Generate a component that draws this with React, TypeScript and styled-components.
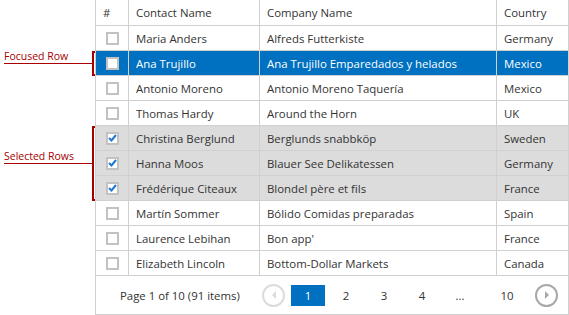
import React from "react";
import styled, { createGlobalStyle } from "styled-components";

const GlobalStyle = createGlobalStyle`
body {
  margin: 0;
  background: #ffffff;
  font-family: "Open Sans", "Noto Sans", sans-serif;
  font-size: 11.4px;
  color: #333333;
}
`

const Page = styled.div`
display: flex;
width: 569px;
height: 315px;
overflow: hidden;
`

const Notes = styled.div`
width: 95px;
position: relative;
flex-shrink: 0;
`

const Note = styled.div<{ top: number; height: number }>`
position: absolute;
left: 4px;
top: ${p => p.top}px;
width: 88px;
height: ${p => p.height}px;
border-right: 2px solid #a80000;
display: flex;
align-items: center;
&::before, &::after {
  content: "";
  position: absolute;
  right: -3px;
  width: 3px;
  height: 2px;
  background: #a80000;
}
&::before { top: 0; }
&::after { bottom: 0; }
`

const NoteLabel = styled.span`
display: block;
width: 100%;
color: #a80000;
font-size: 10.5px;
line-height: 13px;
border-bottom: 1px solid #a80000;
margin-bottom: 14px;
`

const Grid = styled.div`
width: 474px;
height: 315px;
border-left: 1px solid #d0d0d0;
border-right: 1px solid #d0d0d0;
border-bottom: 1px solid #d0d0d0;
box-sizing: border-box;
display: flex;
flex-direction: column;
`

const Row = styled.div<{ kind?: "focused" | "selected" | "plain" }>`
display: grid;
grid-template-columns: 33px 131px 237px 1fr;
height: 25px;
border-bottom: 1px solid #d0d0d0;
box-sizing: border-box;
background: ${p => p.kind === "focused" ? "#0070c0" : p.kind === "selected" ? "#dcdcdc" : "#ffffff"};
color: ${p => p.kind === "focused" ? "#ffffff" : "#333333"};
`

const Cell = styled.div<{ center?: boolean }>`
display: flex;
align-items: center;
justify-content: ${p => p.center ? "center" : "flex-start"};
padding: 0 7px;
border-right: 1px solid #d0d0d0;
white-space: nowrap;
overflow: hidden;
&:last-child { border-right: none; }
`

const HeadRow = styled(Row)`
height: 26px;
`

const Check = styled.span`
width: 13px;
height: 13px;
box-sizing: border-box;
border: 2px solid #c2c2c2;
background: #ffffff;
display: flex;
align-items: center;
justify-content: center;
`

const Pager = styled.div`
flex: 1;
display: flex;
align-items: center;
padding-left: 24px;
`

const Summary = styled.span`
width: 142px;
color: #333333;
`

const NavBtn = styled.span<{ disabled?: boolean; lead?: number }>`
width: 23px;
height: 23px;
margin-left: ${p => p.lead ?? 0}px;
border-radius: 50%;
box-sizing: border-box;
border: 2px solid ${p => p.disabled ? "#dcdcdc" : "#a8a8a8"};
display: flex;
align-items: center;
justify-content: center;
`

const PageNum = styled.span<{ active?: boolean; lead?: number }>`
width: 34px;
height: 21px;
margin-left: ${p => p.lead ?? 4}px;
display: flex;
align-items: center;
justify-content: center;
background: ${p => p.active ? "#0070c0" : "transparent"};
color: ${p => p.active ? "#ffffff" : "#333333"};
`

const rows = [
    ["Maria Anders", "Alfreds Futterkiste", "Germany"],
    ["Ana Trujillo", "Ana Trujillo Emparedados y helados", "Mexico"],
    ["Antonio Moreno", "Antonio Moreno Taquería", "Mexico"],
    ["Thomas Hardy", "Around the Horn", "UK"],
    ["Christina Berglund", "Berglunds snabbköp", "Sweden"],
    ["Hanna Moos", "Blauer See Delikatessen", "Germany"],
    ["Frédérique Citeaux", "Blondel père et fils", "France"],
    ["Martín Sommer", "Bólido Comidas preparadas", "Spain"],
    ["Laurence Lebihan", "Bon app'", "France"],
    ["Elizabeth Lincoln", "Bottom-Dollar Markets", "Canada"],
]

const kindOf = (i: number) => i === 1 ? "focused" : i >= 4 && i <= 6 ? "selected" : "plain"

const Tick = () =>
    <svg width="9" height="8" viewBox="0 0 9 8">
        <path d="M1 4 L3.5 6.5 L8 1" fill="none" stroke="#1e78d2" strokeWidth="2" />
    </svg>

const Arrow = ({ dir, color }: { dir: "left" | "right"; color: string }) =>
    <svg width="6" height="8" viewBox="0 0 6 8">
        <path d={dir === "left" ? "M5 0 L1 4 L5 8 Z" : "M1 0 L5 4 L1 8 Z"} fill={color} />
    </svg>

export default function App() {
    return (
        <Page>
            <GlobalStyle />
            <Notes>
                <Note top={51} height={25}><NoteLabel>Focused Row</NoteLabel></Note>
                <Note top={126} height={75}><NoteLabel>Selected Rows</NoteLabel></Note>
            </Notes>
            <Grid>
                <HeadRow>
                    <Cell>#</Cell>
                    <Cell>Contact Name</Cell>
                    <Cell>Company Name</Cell>
                    <Cell>Country</Cell>
                </HeadRow>
                {rows.map((r, i) =>
                    <Row key={r[0]} kind={kindOf(i)}>
                        <Cell center>
                            <Check>{kindOf(i) === "selected" && <Tick />}</Check>
                        </Cell>
                        <Cell>{r[0]}</Cell>
                        <Cell>{r[1]}</Cell>
                        <Cell>{r[2]}</Cell>
                    </Row>
                )}
                <Pager>
                    <Summary>Page 1 of 10 (91 items)</Summary>
                    <NavBtn disabled><Arrow dir="left" color="#dcdcdc" /></NavBtn>
                    <PageNum active lead={6}>1</PageNum>
                    <PageNum>2</PageNum>
                    <PageNum>3</PageNum>
                    <PageNum>4</PageNum>
                    <PageNum>...</PageNum>
                    <PageNum lead={13}>10</PageNum>
                    <NavBtn lead={11}><Arrow dir="right" color="#a8a8a8" /></NavBtn>
                </Pager>
            </Grid>
        </Page>
    );
}
